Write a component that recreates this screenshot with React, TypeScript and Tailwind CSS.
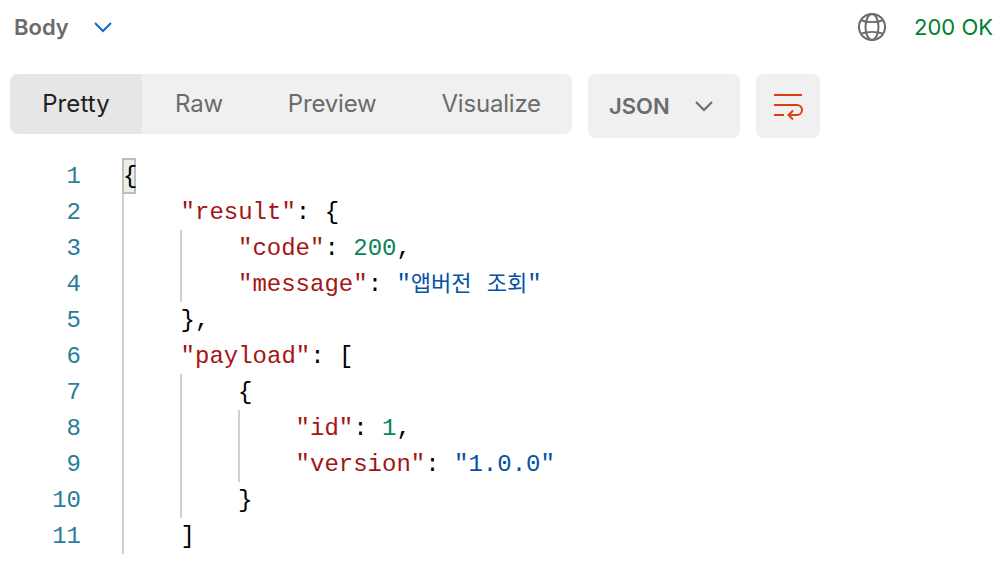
const mono = { fontFamily: '"Liberation Mono", "Noto Sans CJK KR", monospace' };

function Line({ children }: { children: React.ReactNode }) {
  return <div className="h-9 leading-[38px] whitespace-pre">{children}</div>;
}

function Key({ children }: { children: React.ReactNode }) {
  return <span className="text-[#a31515]">{children}</span>;
}

function Str({ children }: { children: React.ReactNode }) {
  return <span className="text-[#0451a5]">{children}</span>;
}

function Num({ children }: { children: React.ReactNode }) {
  return <span className="text-[#098658]">{children}</span>;
}

function Indent({ children }: { children: React.ReactNode }) {
  return <div className="pl-[56.6px]">{children}</div>;
}

// one indent level, the left border is the guide line
function Block({ children, nested }: { children: React.ReactNode; nested?: boolean }) {
  return nested ? (
    <div className="border-l-2 border-[#d0d0d0] pl-[55.6px]">{children}</div>
  ) : (
    <div className="ml-[56px] border-l-2 border-[#d0d0d0] pl-[56px]">{children}</div>
  );
}

export default function App() {
  return (
    <div className="h-[564px] w-[1004px] overflow-hidden bg-white font-['Inter',sans-serif]">
      {/* Response header */}
      <div className="flex h-[54px] items-center justify-between pl-[14px] pr-[11px]">
        <div className="flex items-center gap-[24px]">
          <span className="text-[22px] font-semibold text-[#6b6b6b]">Body</span>
          <svg width="20" height="12" viewBox="0 0 20 12" fill="none" stroke="#0b6ad6" strokeWidth="2">
            <path d="M2 2l8 8 8-8" />
          </svg>
        </div>
        <div className="flex items-center gap-[27px]">
          <svg width="30" height="30" viewBox="0 0 30 30" fill="none" stroke="#6b6b6b" strokeWidth="2">
            <circle cx="15" cy="15" r="13" />
            <ellipse cx="15" cy="15" rx="6.5" ry="13" />
            <path d="M4.5 8.5c6 2 15 2 21 0M4.5 21.5c6-2 15-2 21 0" />
          </svg>
          <span className="text-[22px] text-[#007f31]">200 OK</span>
        </div>
      </div>

      {/* Toolbar */}
      <div className="mt-5 flex items-start pl-[10px]">
        <div className="flex h-[60px] w-[562px] overflow-hidden rounded-lg bg-[#f0f0f0] text-2xl text-[#6b6b6b]">
          <div className="flex w-[132px] items-center justify-center bg-[#e6e6e6] tracking-[0.1px] text-[#212121]">Pretty</div>
          <div className="flex items-center gap-[65px] pl-[33px] tracking-[-0.2px]">
            <span>Raw</span>
            <span>Preview</span>
            <span>Visualize</span>
          </div>
        </div>
        <div className="ml-4 flex h-16 w-[152px] items-center gap-[24px] rounded-lg bg-[#f0f0f0] pl-[21px] text-[22px] font-semibold text-[#6b6b6b]">
          <span>JSON</span>
          <svg width="20" height="12" viewBox="0 0 20 12" fill="none" stroke="#6b6b6b" strokeWidth="2">
            <path d="M2 2l8 8 8-8" />
          </svg>
        </div>
        <div className="ml-4 flex h-16 w-16 items-center justify-center rounded-lg bg-[#f0f0f0]">
          <svg width="30" height="28" viewBox="0 0 30 28" fill="none" stroke="#d9400f" strokeWidth="2">
            <path d="M1 3h28M1 13h23a5 5 0 0 1 0 10h-8M1 23h10M20 18.500l-4.500 4.500 4.500 4.500" />
          </svg>
        </div>
      </div>

      {/* Code */}
      <div className="mt-5 flex text-2xl text-black" style={mono}>
        <div className="w-[81px] text-right text-[#2a7d9b]">
          {Array.from({ length: 11 }, (_, i) => (
            <Line key={i}>{i + 1}</Line>
          ))}
        </div>
        <div className="ml-[41px] border-l-2 border-[#d0d0d0]">
          <div className="-ml-[2px] h-9 w-[14px] border-2 border-[#bdbdbd] bg-[#e8f0e8] indent-[-1px] leading-[34px]">{"{"}</div>
          <Indent>
            <Line>
              <Key>"result"</Key>: {"{"}
            </Line>
          </Indent>
          <Block>
            <Line>
              <Key>"code"</Key>: <Num>200</Num>,
            </Line>
            <Line>
              <Key>"message"</Key>: <Str>"<span className="text-[22px] [word-spacing:2px]">앱버전 조회</span>"</Str>
            </Line>
          </Block>
          <Indent>
            <Line>{"},"}</Line>
            <Line>
              <Key>"payload"</Key>: [
            </Line>
          </Indent>
          <Block>
            <Line>{"{"}</Line>
            <Block nested>
              <Line>
                <Key>"id"</Key>: <Num>1</Num>,
              </Line>
              <Line>
                <Key>"version"</Key>: <Str>"1.0.0"</Str>
              </Line>
            </Block>
            <Line>{"}"}</Line>
          </Block>
          <Indent>
            <Line>]</Line>
          </Indent>
        </div>
      </div>
    </div>
  );
}
